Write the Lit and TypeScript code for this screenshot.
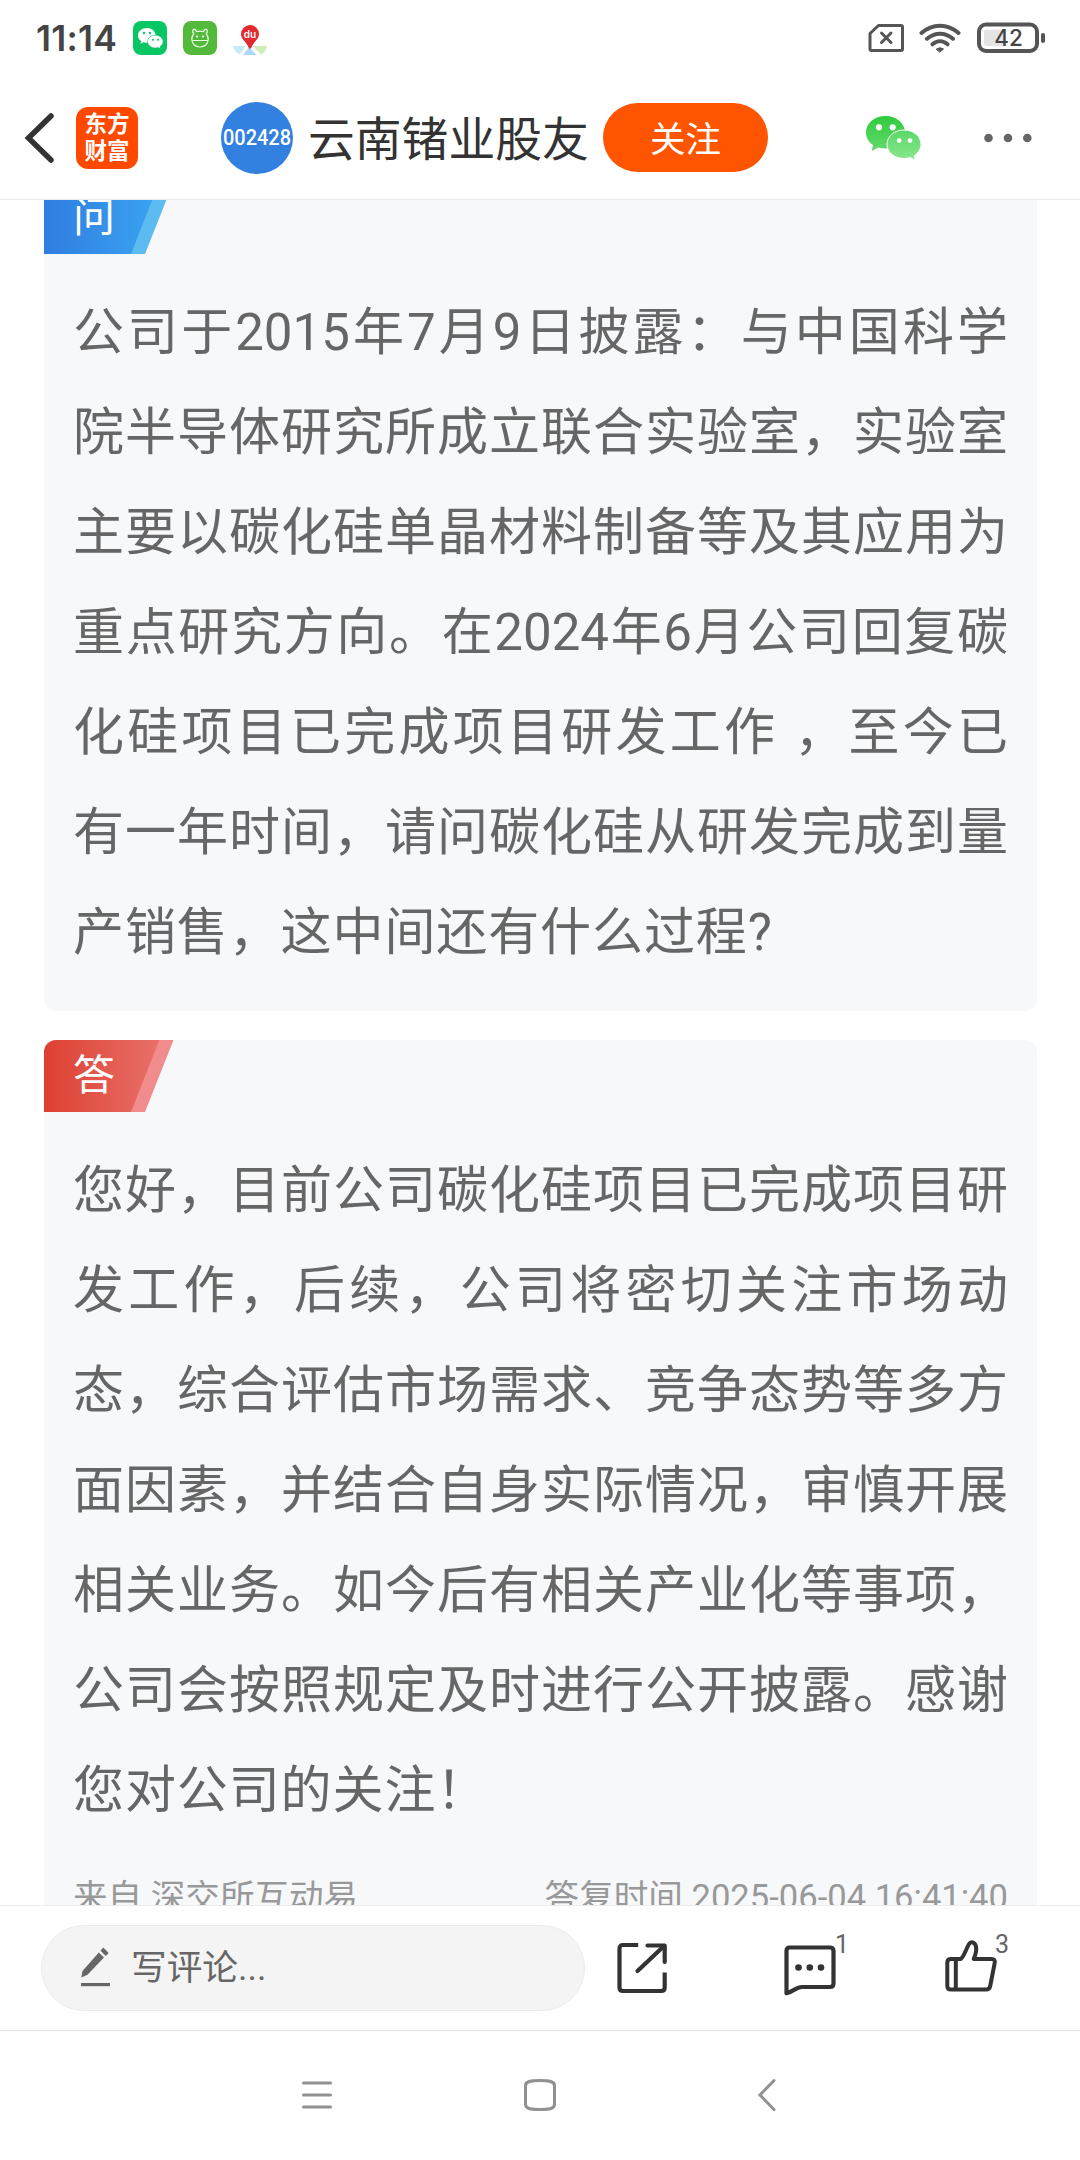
import { LitElement, html, svg, css } from "lit";
import { customElement, property } from "lit/decorators.js";

const QUESTION = [
  "公司于2015年7月9日披露：与中国科学",
  "院半导体研究所成立联合实验室，实验室",
  "主要以碳化硅单晶材料制备等及其应用为",
  "重点研究方向。在2024年6月公司回复碳",
  "化硅项目已完成项目研发工作 ，至今已",
  "有一年时间，请问碳化硅从研发完成到量",
  "产销售，这中间还有什么过程?",
];

const ANSWER = [
  "您好，目前公司碳化硅项目已完成项目研",
  "发工作，后续，公司将密切关注市场动",
  "态，综合评估市场需求、竞争态势等多方",
  "面因素，并结合自身实际情况，审慎开展",
  "相关业务。如今后有相关产业化等事项，",
  "公司会按照规定及时进行公开披露。感谢",
  "您对公司的关注！",
];

@customElement("status-bar")
export class StatusBar extends LitElement {
  static styles = css`
    :host {
      display: flex;
      align-items: center;
      height: 76px;
      padding: 0 34px 0 36px;
      box-sizing: border-box;
      color: #444;
      font-family: Inter, "Noto Sans CJK SC", sans-serif;
    }
    svg { display: block; flex: none; }
    .time {
      width: 97px;
      font-size: 35.500px;
      font-weight: 600;
      line-height: 40px;
      letter-spacing: 0.2px;
      white-space: nowrap;
      padding-top: 1px;
    }
    .apps { display: flex; gap: 16px; flex: 1; }
    .system { display: flex; align-items: center; }
    .wifi { margin: 0 16px 0 14px; }
    .level { font: 500 22.500px Inter, sans-serif; }
    .du { font: 600 10px Inter, sans-serif; }
  `;

  render() {
    return html`
      <div class="time">11:14</div>
      <div class="apps">
        <svg width="34" height="34" viewBox="0 0 34 34">
          <rect width="34" height="34" rx="8" fill="#07c765" />
          <path d="M14 7C8.800 7 5 10.300 5 14.400c0 2.400 1.200 4.400 3.200 5.700l-.8 2.600 3-1.500c1.400.4 2.500.5 4 .5-.7-4.300 3-8 8.200-8C21.800 9.600 18.300 7 14 7z" fill="#fff" />
          <path d="M22.300 14.400c-4.300 0-7.500 2.700-7.500 6.100s3.200 6.200 7.500 6.200c1 0 1.900-.1 2.700-.4l2.400 1.300-.6-2.100c1.900-1.200 3-3 3-5 0-3.400-3.300-6.100-7.500-6.100z" fill="#fff" />
          <g fill="#07c765"><circle cx="11" cy="12" r="1.200" /><circle cx="17" cy="12" r="1.200" /><circle cx="20" cy="18.700" r="1" /><circle cx="25" cy="18.700" r="1" /></g>
        </svg>
        <svg width="34" height="34" viewBox="0 0 34 34">
          <rect width="34" height="34" rx="8" fill="#52b93a" />
          <g fill="none" stroke="#e9ffdf" stroke-width="1.200" stroke-linejoin="round">
            <path d="M11 12.800C9.700 11.500 9.500 9.500 10.300 8.500c1.200-.8 2.700.2 3.200 2.200 2.200-.8 4.800-.8 7 0 .5-2 2-3 3.200-2.200.8 1 .6 3-.7 4.300M11 12.800C9.500 14.200 8.800 16 8.800 18c0 4.700 3.200 8 8.200 8s8.200-3.300 8.200-8c0-2-.7-3.800-2.200-5.200M8.900 19.500h16.200" />
          </g>
          <circle cx="14" cy="15.500" r="1.100" fill="#fff" /><circle cx="20" cy="15.500" r="1.100" fill="#fff" />
        </svg>
        <svg width="34" height="34" viewBox="0 0 34 34">
          <path d="M0 25h13l-6 8C3 32.500 1 29 0 25z" fill="#c5eafb" />
          <path d="M16 26l7.500 8H10z" fill="#a9dbf8" />
          <path d="M20 25h14c-.7 4-2.500 7-6 8.500z" fill="#cdeeb9" />
          <path d="M17 4a9 9 0 0 0-9 9c0 5.500 5.500 7.500 8 14.500h2c2.500-7 8-9 8-14.500a9 9 0 0 0-9-9z" fill="#e12b31" />
          <text class="du" x="17" y="16.500" text-anchor="middle" fill="#fff">du</text>
        </svg>
      </div>
      <div class="system">
        <svg width="37" height="30" viewBox="0 0 37 30" fill="none" stroke="#555" stroke-linejoin="round" stroke-linecap="round">
          <path d="M10.500 2.500H33q1.500 0 1.500 1.500V26q0 1.500-1.500 1.500H3.500Q2 27.500 2 26V10.500z" stroke-width="3" />
          <path d="M13.500 10l9.500 9.500M23 10l-9.500 9.500" stroke-width="3" />
        </svg>
        <svg class="wifi" width="42" height="32" viewBox="0 0 42 32" fill="none" stroke="#555" stroke-width="4" stroke-linecap="round">
          <path d="M2.500 11C13.500 1.200 28.500 1.200 39.500 11M8 16.800c7.700-6.800 18.300-6.800 26 0M13.500 22.300c4.500-4 10.500-4 15 0" />
          <path d="M17.500 27q3.500-2.600 7 0L21 30z" fill="#555" stroke-width="1" stroke-linejoin="round" />
        </svg>
        <svg width="69" height="32" viewBox="0 0 69 32">
          <rect x="7" y="7.500" width="20" height="16.500" rx="2.500" fill="#e5e5e5" />
          <rect x="2" y="2.500" width="58" height="26.500" rx="7" fill="none" stroke="#555" stroke-width="4" />
          <rect x="64" y="11" width="4" height="10" rx="2" fill="#555" />
          <text class="level" x="31.500" y="24" text-anchor="middle" fill="#444">42</text>
        </svg>
      </div>
    `;
  }
}

@customElement("top-bar")
export class TopBar extends LitElement {
  static styles = css`
    :host {
      display: flex;
      align-items: center;
      height: 124px;
      padding: 0 43px 0 21px;
      box-sizing: border-box;
      border-bottom: 1px solid #ebebeb;
      font-family: "Noto Sans CJK SC", sans-serif;
    }
    svg { display: block; flex: none; }
    .brand {
      display: flex;
      flex-direction: column;
      align-items: center;
      width: 62px;
      height: 62px;
      padding-top: 2px;
      box-sizing: border-box;
      margin-left: 21px;
      border-radius: 12px;
      background: #ff4800;
      color: #fff;
      font-size: 22.500px;
      font-weight: 700;
      line-height: 27px;
    }
    .avatar { margin-left: 83px; }
    .code { font: 500 22px Roboto, sans-serif; }
    .name {
      margin: -4px 0 0 15px;
      width: 295px;
      font-size: 46.800px;
      line-height: 64px;
      color: #333;
      white-space: nowrap;
    }
    .follow {
      width: 165px;
      height: 69px;
      line-height: 67px;
      border-radius: 35px;
      background: #ff5500;
      color: #fff;
      font-size: 35.500px;
      text-align: center;
    }
    .wechat { margin-left: 97px; margin-right: auto; }
  `;

  render() {
    return html`
      <svg width="34" height="60" viewBox="0 0 34 60" fill="none" stroke="#333" stroke-width="5.500" stroke-linecap="round" stroke-linejoin="miter">
        <path d="M30 8L7.500 30 30 52" />
      </svg>
      <div class="brand"><span>东方</span><span>财富</span></div>
      <svg class="avatar" width="72" height="72" viewBox="0 0 72 72">
        <circle cx="36" cy="36" r="36" fill="#3281e0" />
        <text class="code" x="2" y="42.500" fill="#fff" textLength="68" lengthAdjust="spacingAndGlyphs">002428</text>
      </svg>
      <div class="name">云南锗业股友</div>
      <div class="follow">关注</div>
      <svg class="wechat" width="57" height="46" viewBox="0 0 57 46">
        <defs>
          <linearGradient id="back" x1="0" y1="0" x2="0" y2="1"><stop offset="0" stop-color="#2ecb3c" /><stop offset="1" stop-color="#66d96d" /></linearGradient>
          <linearGradient id="front" x1="0" y1="0" x2="0" y2="1"><stop offset="0" stop-color="#5bd765" /><stop offset="1" stop-color="#8ae88f" /></linearGradient>
        </defs>
        <path d="M20.500 1C9.500 1 1 8.300 1 17.500c0 5.200 2.600 9.600 7 12.600L6.800 36l6.400-3.500c2.300.7 4.700 1 7.300 1 11 0 19.500-7.200 19.500-16.200S31.500 1 20.500 1z" fill="url(#back)" />
        <path d="M39 15c-9.600 0-17 6.300-17 14.300S29.400 43.500 39 43.500c2.200 0 4.300-.3 6.200-.9l5.300 2.700-1.100-4.800c4-2.600 6.600-6.600 6.600-11.200C56 21.300 48.600 15 39 15z" fill="url(#front)" stroke="#fff" stroke-width="1" />
        <g fill="#fff"><circle cx="14" cy="12.300" r="3.100" /><circle cx="27.700" cy="12.300" r="3.100" /><circle cx="34.200" cy="25.600" r="2.400" /><circle cx="45" cy="25.600" r="2.400" /></g>
      </svg>
      <svg width="54" height="12" viewBox="0 0 54 12" fill="#666">
        <circle cx="5.500" cy="6" r="4.300" /><circle cx="25" cy="6" r="4.300" /><circle cx="44.300" cy="6" r="4.300" />
      </svg>
    `;
  }
}

@customElement("qa-card")
export class QaCard extends LitElement {
  @property() kind: "ask" | "reply" = "ask";
  @property() label = "";
  @property({ attribute: false }) lines: string[] = [];

  static styles = css`
    :host {
      display: block;
      border-radius: 12px;
      overflow: hidden;
      background: #f7f8fa;
      font-family: Roboto, "Noto Sans CJK SC", sans-serif;
    }
    svg { display: block; }
    .tag { font: 42px "Noto Sans CJK SC", sans-serif; }
    .body {
      padding: 29px 29px 28px;
      font-size: 51px;
      line-height: 100px;
      color: #666;
      text-spacing-trim: space-all;
    }
    .line {
      height: 100px;
      white-space: nowrap;
      text-align: justify;
      text-align-last: justify;
    }
    .line:last-child {
      text-align-last: left;
      letter-spacing: 0.9px;
    }
  `;

  render() {
    const ask = this.kind === "ask";
    return html`
      <svg width="130" height="72" viewBox="0 0 130 72">
        <defs>
          <linearGradient id="fill" x1="0" x2="1">
            ${ask
              ? svg`<stop offset="0" stop-color="#307de1" /><stop offset="1" stop-color="#3aa4f1" />`
              : svg`<stop offset="0" stop-color="#dd4031" /><stop offset="1" stop-color="#e87069" />`}
          </linearGradient>
        </defs>
        <path d="M100 0H129.500L101 72H80z" fill=${ask ? "#5cbbf0" : "#f28b8b"} />
        <path d="M0 0H115.300L87 72H0z" fill="url(#fill)" />
        <text class="tag" x="29" y="49.500" fill="#fff">${this.label}</text>
      </svg>
      <div class="body">${this.lines.map((l) => html`<div class="line">${l}</div>`)}</div>
      <slot></slot>
    `;
  }
}

@customElement("comment-bar")
export class CommentBar extends LitElement {
  static styles = css`
    :host {
      display: flex;
      align-items: center;
      height: 126px;
      box-sizing: border-box;
      padding: 0 0 0 41px;
      border-top: 1px solid #ebebeb;
      border-bottom: 1px solid #e2e2e2;
      font-family: Roboto, "Noto Sans CJK SC", sans-serif;
      color: #666;
    }
    svg { display: block; flex: none; }
    .field {
      display: flex;
      align-items: center;
      gap: 19px;
      width: 544px;
      height: 86px;
      padding-left: 38px;
      box-sizing: border-box;
      border: 1px solid #ebebeb;
      border-radius: 43px;
      background: #f4f4f4;
      font-size: 35.700px;
      line-height: 50px;
    }
    .pencil { margin-top: -2px; }
    .share { margin: -3px 0 0 30px; }
    .item { display: flex; align-items: flex-start; margin-top: -3px; }
    .comments { margin-left: 114px; }
    .likes { margin-left: 95px; }
    .count {
      width: 18px;
      margin: -3px 0 0 -2px;
      font-size: 25px;
      line-height: 26px;
    }
  `;

  render() {
    return html`
      <div class="field">
        <svg class="pencil" width="32" height="44" viewBox="0 0 32 44" fill="#666">
          <path d="M1.300 32.500L2.500 26 18.800 7.500l5.200 5L7.500 29.800z" />
          <path d="M20.500 5.800L23.300 2.500l5.400 5.400-3 3.200z" />
          <rect x="1" y="38" width="29" height="3.200" />
        </svg>
        <span>写评论...</span>
      </div>
      <svg class="share" width="54" height="60" viewBox="0 0 54 60" fill="none" stroke="#333" stroke-width="4.200" stroke-linejoin="round">
        <path d="M23.200 8H8q-3.500 0-3.500 3.500v39Q4.500 54 8 54H46.200q3.500 0 3.500-3.500V35.500" />
        <path d="M32.500 8.500h17.200V25" stroke-linecap="round" />
        <path d="M49 9L22.500 34" stroke-linecap="round" />
      </svg>
      <div class="item comments">
        <svg width="54" height="64" viewBox="0 0 54 64">
          <path d="M6.500 12.500H47q3.500 0 3.500 3.500v32.500q0 3.500-3.500 3.500H19c-6 0-8.500 4.500-15.500 6.200V16q0-3.500 3-3.500z" fill="none" stroke="#333" stroke-width="4.200" stroke-linejoin="round" />
          <g fill="#333"><circle cx="15.500" cy="32.500" r="3.300" /><circle cx="26.800" cy="32.500" r="3.300" /><circle cx="38" cy="32.500" r="3.300" /></g>
        </svg>
        <span class="count">1</span>
      </div>
      <div class="item likes">
        <svg width="49" height="64" viewBox="0 0 49 64" overflow="visible" fill="none" stroke="#333" stroke-width="4" stroke-linejoin="round">
          <path d="M2.800 24H12.500c3-1 5.700-10.500 8.500-15 1.700-2.700 6-2.200 7 2.500.8 4-.5 8.500-2.300 12.500H43.500q4 0 3.200 4l-4.500 23q-.7 3.500-4 3.500H2.800q-3.500 0-3.500-3.500V27.500q0-3.500 3.500-3.500z" />
          <path d="M7.800 24V54" />
        </svg>
        <span class="count">3</span>
      </div>
    `;
  }
}

@customElement("nav-keys")
export class NavKeys extends LitElement {
  static styles = css`
    :host {
      display: flex;
      align-items: center;
      justify-content: center;
      gap: 187px;
      height: 129px;
      padding-bottom: 2px;
      box-sizing: border-box;
    }
    svg { display: block; }
  `;

  render() {
    return html`
      <svg width="36" height="36" viewBox="0 0 36 36" stroke="#919191" stroke-width="3" stroke-linecap="round">
        <path d="M4.500 6h27M4.500 18h27M4.500 30h27" />
      </svg>
      <svg width="36" height="36" viewBox="0 0 36 36" fill="none" stroke="#919191" stroke-width="3">
        <path d="M18 3.500c10 0 14.500 1 14.500 5v19c0 4-4.500 5-14.500 5s-14.500-1-14.500-5v-19c0-4 4.500-5 14.500-5z" />
      </svg>
      <svg width="36" height="36" viewBox="0 0 36 36" fill="none" stroke="#919191" stroke-width="3" stroke-linecap="round">
        <path d="M29 3.500L15 18l14 14.500" />
      </svg>
    `;
  }
}

@customElement("app-root")
export class AppRoot extends LitElement {
  static styles = css`
    :host {
      display: flex;
      flex-direction: column;
      width: 1080px;
      height: 2160px;
      overflow: hidden;
      background: #fff;
    }
    status-bar, top-bar, comment-bar, nav-keys { flex: none; }
    .viewport {
      flex: 1;
      min-height: 0;
      overflow: hidden;
    }
    .feed {
      display: flex;
      flex-direction: column;
      gap: 29px;
      margin-top: -18px;
      padding: 0 43px 0 44px;
    }
    .meta {
      display: flex;
      justify-content: space-between;
      padding: 3px 29px 30px;
      font: 34.600px/50px Roboto, "Noto Sans CJK SC", sans-serif;
      color: #999;
    }
  `;

  render() {
    return html`
      <status-bar></status-bar>
      <top-bar></top-bar>
      <div class="viewport">
        <div class="feed">
          <qa-card kind="ask" label="问" .lines=${QUESTION}></qa-card>
          <qa-card kind="reply" label="答" .lines=${ANSWER}>
            <div class="meta"><span>来自 深交所互动易</span><span>答复时间 2025-06-04 16:41:40</span></div>
          </qa-card>
        </div>
      </div>
      <comment-bar></comment-bar>
      <nav-keys></nav-keys>
    `;
  }
}
